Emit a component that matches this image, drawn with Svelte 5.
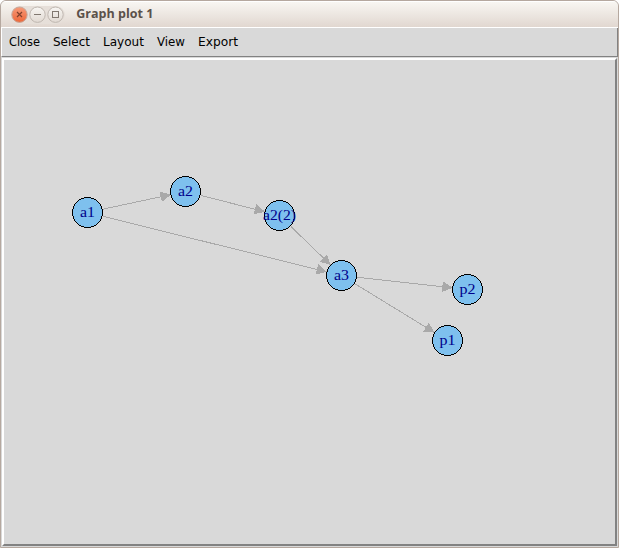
<script>
  const menu = [
    { label: 'Close', width: 31, gap: 13 },
    { label: 'Select', width: 37, gap: 13 },
    { label: 'Layout', width: 41, gap: 13 },
    { label: 'View', width: 28, gap: 13 },
    { label: 'Export', width: 40, gap: 0 }
  ];
  const nodes = {
    a1: { x: 87.5, y: 212.5, label: 'a1', width: 15 },
    a2: { x: 185.5, y: 191.5, label: 'a2', width: 15 },
    a22: { x: 279.5, y: 215.5, label: 'a2(2)', width: 33 },
    a3: { x: 341.5, y: 275.5, label: 'a3', width: 15 },
    p2: { x: 467.5, y: 289.5, label: 'p2', width: 16 },
    p1: { x: 447.5, y: 340.5, label: 'p1', width: 16 }
  };
  const radius = 15;
  const edges = [['a1', 'a2'], ['a1', 'a3'], ['a2', 'a22'], ['a22', 'a3'], ['a3', 'p2'], ['a3', 'p1']].map(([s, t]) => {
    const a = nodes[s];
    const b = nodes[t];
    const d = Math.hypot(b.x - a.x, b.y - a.y);
    const ux = (b.x - a.x) / d;
    const uy = (b.y - a.y) / d;
    const tx = b.x - ux * radius;
    const ty = b.y - uy * radius;
    const bx = tx - ux * 10.3;
    const by = ty - uy * 10.3;
    return {
      x1: a.x + ux * (radius + 1), y1: a.y + uy * (radius + 1), x2: bx, y2: by,
      head: `${tx},${ty} ${bx - uy * 5.3},${by + ux * 5.3} ${bx + uy * 5.3},${by - ux * 5.3}`
    };
  });
</script>

<div class="window">
  <header>
    <svg class="buttons" width="54" height="18" viewBox="0 0 54 18">
      <defs>
        <linearGradient id="orange" x2="0" y2="1">
          <stop offset="0" stop-color="#f69a79" /><stop offset="1" stop-color="#ed6638" />
        </linearGradient>
        <linearGradient id="pale" x2="0" y2="1">
          <stop offset="0" stop-color="#f8f6f3" /><stop offset="1" stop-color="#e1d9d2" />
        </linearGradient>
      </defs>
      <rect width="54" height="18" rx="9" fill="#e6dfd9" />
      <circle cx="8.5" cy="8.7" r="7.7" fill="url(#orange)" stroke="#c7a99b" />
      <circle cx="26.5" cy="8.7" r="7.7" fill="url(#pale)" stroke="#bfb7b0" />
      <circle cx="44.5" cy="8.7" r="7.7" fill="url(#pale)" stroke="#bfb7b0" />
      <path d="M6 6l5 5M11 6l-5 5" stroke="#81402c" stroke-width="1.2" />
      <path d="M23 8.5h7" stroke="#817870" />
      <rect x="41.5" y="5.5" width="6" height="6" fill="none" stroke="#817870" />
    </svg>
    <svg class="title" width="80" height="20"><text x="-0.7" y="13" textLength="77" lengthAdjust="spacingAndGlyphs">Graph plot 1</text></svg>
  </header>
  <nav>
    {#each menu as item}
      <svg width={item.width} height="20" style="margin-right: {item.gap}px"><text x="0" y="14" textLength={item.width} lengthAdjust="spacingAndGlyphs">{item.label}</text></svg>
    {/each}
  </nav>
  <main>
    <svg class="graph" width="611" height="484" viewBox="4 60 611 484">
      {#each edges as e}
        <line x1={e.x1} y1={e.y1} x2={e.x2} y2={e.y2} />
        <polygon points={e.head} />
      {/each}
      {#each Object.values(nodes) as n}
        <circle cx={n.x} cy={n.y} r={radius} />
        <text x={n.x} y={n.y + 4.5} textLength={n.width} lengthAdjust="spacingAndGlyphs">{n.label}</text>
      {/each}
    </svg>
  </main>
</div>

<style>
  :global(body) { background: #fff; overflow: hidden; }
  .window {
    box-sizing: border-box;
    width: 619px;
    height: 548px;
    border: 1px solid #b5a89f;
    border-radius: 6px 6px 0 0;
    background: #d9d9d9;
    display: flex;
    flex-direction: column;
    overflow: hidden;
  }
  svg { display: block; flex: none; overflow: visible; }
  header {
    box-sizing: border-box;
    height: 27px;
    border-top: 1px solid #fff;
    border-bottom: 1px solid #fff;
    background: linear-gradient(#f8f6f2, #e1d7d0);
    display: flex;
    align-items: flex-start;
    padding: 4px 0 0 10px;
  }
  .title { margin-left: 12px; margin-top: -1px; }
  .title text { font: bold 12.5px "Open Sans", sans-serif; fill: #5b514a; }
  nav {
    box-sizing: border-box;
    height: 29px;
    border-left: 1px solid #fff;
    border-right: 1px solid #828282;
    border-bottom: 1px solid #828282;
    display: flex;
    padding: 4px 0 0 7px;
  }
  nav text { font: 12px "DejaVu Sans", sans-serif; fill: #000; }
  main {
    margin: 1px;
    border: 2px solid;
    border-color: #fff #828282 #828282 #fff;
    width: 611px;
    height: 484px;
  }
  .graph { overflow: hidden; }
  line { stroke: #a9a9a9; stroke-width: 1; shape-rendering: crispEdges; }
  polygon { fill: #a9a9a9; shape-rendering: crispEdges; }
  .graph circle { fill: #7ec0ee; stroke: #000; shape-rendering: crispEdges; }
  .graph text { font: 15px "Liberation Serif", serif; fill: #00008b; text-anchor: middle; }
</style>
